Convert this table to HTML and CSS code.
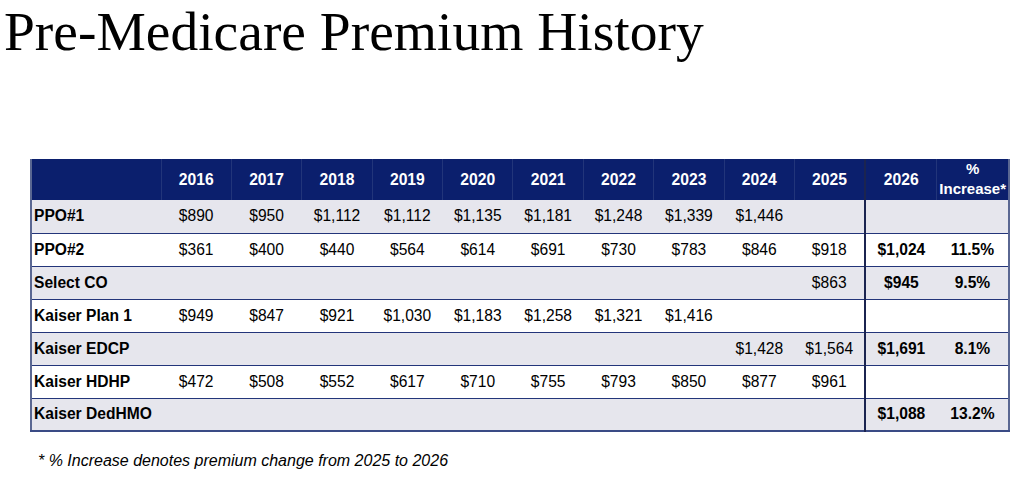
FILE: index.html
```html
<!DOCTYPE html>
<html>
<head>
<meta charset="utf-8">
<link rel="stylesheet" href="styles.css">
</head>
<body>
<h1 class="title">Pre-Medicare Premium History</h1>
<table class="premiums">
  <colgroup>
    <col class="c-label">
    <col class="c-year"><col class="c-year"><col class="c-year"><col class="c-year"><col class="c-year">
    <col class="c-year"><col class="c-year"><col class="c-year"><col class="c-year"><col class="c-year">
    <col class="c-cur"><col class="c-cur">
  </colgroup>
  <thead>
    <tr>
      <th></th>
      <th>2016</th><th>2017</th><th>2018</th><th>2019</th><th>2020</th>
      <th>2021</th><th>2022</th><th>2023</th><th>2024</th><th class="sep">2025</th>
      <th>2026</th><th class="pct">%<br>Increase*</th>
    </tr>
  </thead>
  <tbody>
    <tr class="grey">
      <td class="label">PPO#1</td>
      <td>$890</td><td>$950</td><td>$1,112</td><td>$1,112</td><td>$1,135</td>
      <td>$1,181</td><td>$1,248</td><td>$1,339</td><td>$1,446</td><td class="sep"></td>
      <td class="b"></td><td class="b"></td>
    </tr>
    <tr>
      <td class="label">PPO#2</td>
      <td>$361</td><td>$400</td><td>$440</td><td>$564</td><td>$614</td>
      <td>$691</td><td>$730</td><td>$783</td><td>$846</td><td class="sep">$918</td>
      <td class="b">$1,024</td><td class="b">11.5%</td>
    </tr>
    <tr class="grey">
      <td class="label">Select CO</td>
      <td></td><td></td><td></td><td></td><td></td>
      <td></td><td></td><td></td><td></td><td class="sep">$863</td>
      <td class="b">$945</td><td class="b">9.5%</td>
    </tr>
    <tr>
      <td class="label">Kaiser Plan 1</td>
      <td>$949</td><td>$847</td><td>$921</td><td>$1,030</td><td>$1,183</td>
      <td>$1,258</td><td>$1,321</td><td>$1,416</td><td></td><td class="sep"></td>
      <td class="b"></td><td class="b"></td>
    </tr>
    <tr class="grey">
      <td class="label">Kaiser EDCP</td>
      <td></td><td></td><td></td><td></td><td></td>
      <td></td><td></td><td></td><td>$1,428</td><td class="sep">$1,564</td>
      <td class="b">$1,691</td><td class="b">8.1%</td>
    </tr>
    <tr>
      <td class="label">Kaiser HDHP</td>
      <td>$472</td><td>$508</td><td>$552</td><td>$617</td><td>$710</td>
      <td>$755</td><td>$793</td><td>$850</td><td>$877</td><td class="sep">$961</td>
      <td class="b"></td><td class="b"></td>
    </tr>
    <tr class="grey">
      <td class="label">Kaiser DedHMO</td>
      <td></td><td></td><td></td><td></td><td></td>
      <td></td><td></td><td></td><td></td><td class="sep"></td>
      <td class="b">$1,088</td><td class="b">13.2%</td>
    </tr>
  </tbody>
</table>
<p class="note">* % Increase denotes premium change from 2025 to 2026</p>
</body>
</html>
```
FILE: styles.css
```css
html, body {
  margin: 0;
  padding: 0;
  background: #ffffff;
}

.title {
  margin: 0;
  padding-left: 4px;
  font-family: "Liberation Serif", "Times New Roman", serif;
  font-weight: normal;
  font-size: 55.5px;
  line-height: 64px;
  color: #000;
}

.premiums {
  margin: 95px 0 0 30px;
  width: 978px;
  border-collapse: collapse;
  table-layout: fixed;
  font-family: "Liberation Sans", Arial, sans-serif;
  color: #000;
  border-left: 2px solid #5a6792;
  border-right: 2px solid #5a6792;
  border-bottom: 2px solid #3a4b85;
}

.c-label { width: 130px; }
.c-year { width: 70.4px; }
.c-cur { width: 72px; }

.premiums thead th {
  background: #0b1f6d;
  color: #ffffff;
  font-weight: bold;
  font-size: 15.7px;
  line-height: 17px;
  height: 38.5px;
  padding: 0;
  text-align: center;
  vertical-align: middle;
  border-left: 1px solid #22357a;
  box-sizing: border-box;
}

.premiums thead th:first-child {
  border-left: none;
}

.premiums thead th.pct {
  font-size: 15px;
  line-height: 20px;
  padding-bottom: 1px;
}

.premiums tbody td {
  height: 33px;
  padding: 0;
  font-size: 15.6px;
  line-height: 18px;
  text-align: center;
  vertical-align: middle;
  border-top: 1.5px solid #23357a;
  box-sizing: border-box;
}

.premiums tbody tr:first-child td {
  border-top: none;
}

.premiums tr.grey td {
  background: #e6e6ed;
}

.premiums td.label {
  text-align: left;
  padding-left: 2px;
  font-weight: bold;
}

.premiums .sep {
  border-right: 2px solid #1b2450;
}

.premiums td.b {
  font-weight: bold;
}

.note {
  margin: 20px 0 0 38px;
  font-family: "Liberation Sans", Arial, sans-serif;
  font-style: italic;
  font-size: 16px;
  line-height: 18px;
  color: #000;
}
```
